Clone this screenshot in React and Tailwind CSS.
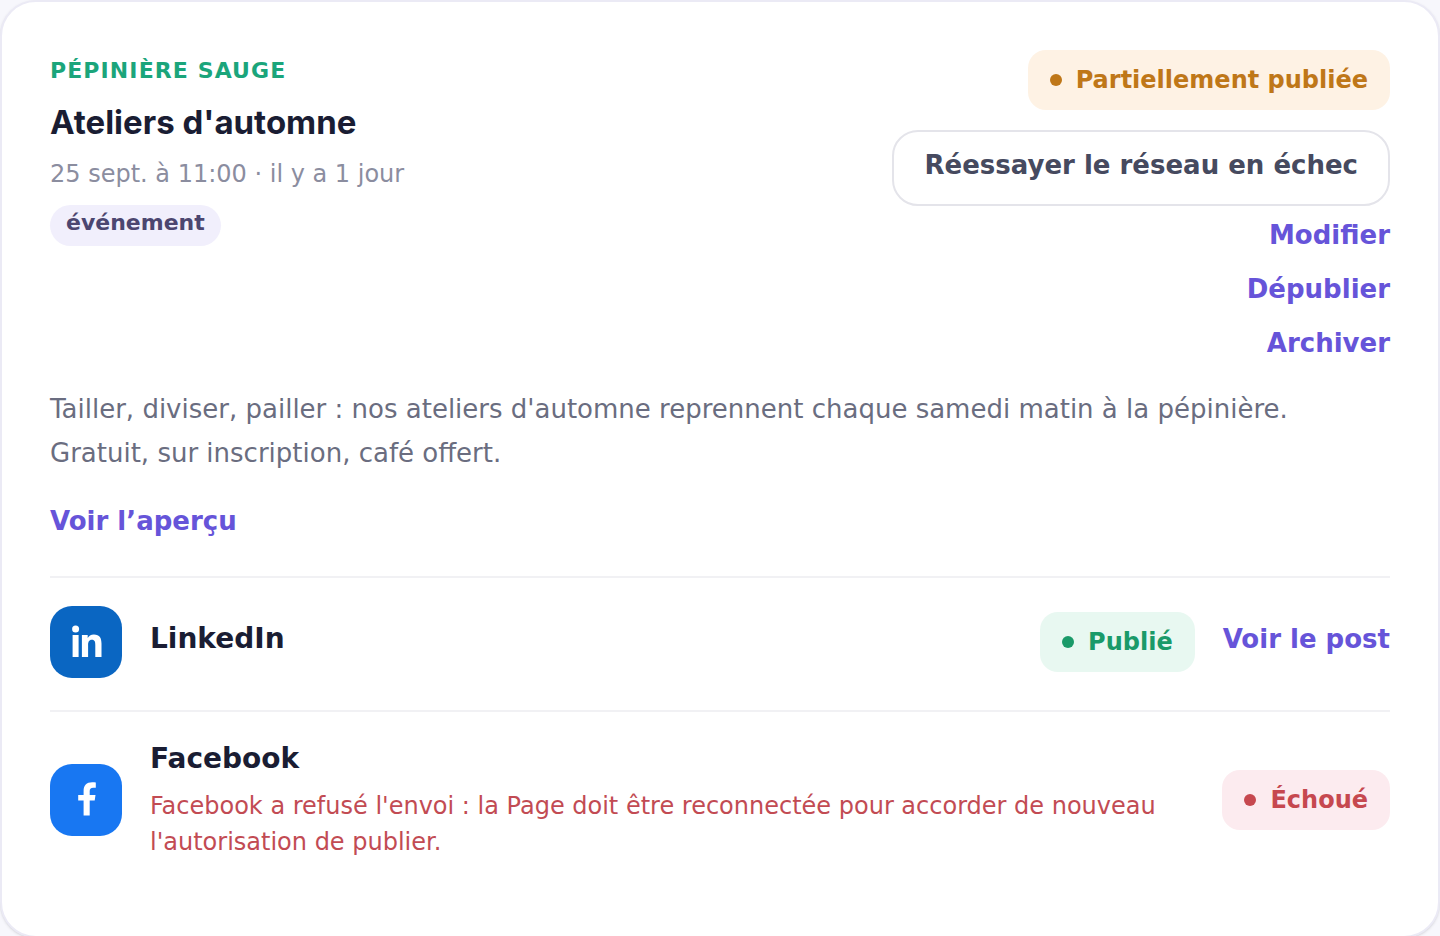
import React from 'react';
import clsx from 'clsx';

const POST = {
  brand: 'Pépinière Sauge',
  title: "Ateliers d'automne",
  meta: '25 sept. à 11:00 · il y a 1 jour',
  tag: 'événement',
  excerpt:
    "Tailler, diviser, pailler : nos ateliers d'automne reprennent chaque samedi matin à la pépinière. Gratuit, sur inscription, café offert.",
};

const NETWORKS = [
  { id: 'linkedin', name: 'LinkedIn', status: 'Publié', tone: 'success', link: 'Voir le post' },
  {
    id: 'facebook',
    name: 'Facebook',
    status: 'Échoué',
    tone: 'danger',
    error:
      "Facebook a refusé l'envoi : la Page doit être reconnectée pour accorder de nouveau l'autorisation de publier.",
  },
];

const LINK = 'text-[26px] leading-[34px] font-bold text-[#6654d9] hover:underline';

function StatusBadge({ tone, children }) {
  return (
    <span
      className={clsx(
        'inline-flex shrink-0 items-center gap-[14px] h-[60px] px-[22px] rounded-[18px] text-[24px] font-bold whitespace-nowrap',
        tone === 'warning' && 'bg-[#fef2e4] text-[#bf7718]',
        tone === 'success' && 'bg-[#e8f8f1] text-[#1a9a69]',
        tone === 'danger' && 'bg-[#fcebef] text-[#c6484f]'
      )}
    >
      <span className="size-3 rounded-full bg-current"></span>
      {children}
    </span>
  );
}

function NetworkIcon({ id }) {
  const isLinkedIn = id === 'linkedin';
  return (
    <span
      className={clsx(
        'flex size-[72px] shrink-0 items-center justify-center rounded-[22px] text-white',
        isLinkedIn ? 'bg-[#0a66c2]' : 'bg-[#1877f2]'
      )}
    >
      <svg viewBox="0 0 36 36" className="size-9" fill="currentColor" aria-hidden="true">
        {isLinkedIn ? (
          <>
            <circle cx="7.6" cy="4.9" r="3.5" />
            <path d="M4.6 11h6v22h-6z" />
            <path d="M13.9 11h5.8v3c1-1.9 3.1-3.5 6.200-3.500 5.900 0 7.600 3.700 7.600 9.100V33h-6.200V21.200c0-3-.4-5.400-3.400-5.400s-3.800 2.500-3.800 5.400V33h-6.200z" />
          </>
        ) : (
          <path d="M15.600 33.500V18.600h-5.400v-5.700h5.400V9.200c0-5.800 2.900-8.900 8.600-8.900 1.500 0 2.800.1 3.600.3v5.200h-2.500c-2.800 0-3.600 1.200-3.600 3.500v3.600h5.800l-.8 5.700h-5v14.900z" />
        )}
      </svg>
    </span>
  );
}

function NetworkRow({ network }) {
  return (
    <li className="flex items-center gap-7 border-t-2 border-[#f1f1f4] pt-7 pb-8 last:pb-7">
      <NetworkIcon id={network.id} />
      <div className="min-w-0 flex-1">
        <h3 className="pb-[6px] text-[28px] leading-[38px] font-bold text-[#1a1d33]">{network.name}</h3>
        {network.error && (
          <p className="mt-1 text-[24px] leading-9 text-[#c24b53]">{network.error}</p>
        )}
      </div>
      <StatusBadge tone={network.tone}>{network.status}</StatusBadge>
      {network.link && (
        <a href="#post" className={clsx(LINK, 'pb-[6px]')}>
          {network.link}
        </a>
      )}
    </li>
  );
}

export default function App() {
  return (
    <main className="min-h-screen bg-[#f7f7fc] font-['DejaVu_Sans',sans-serif]">
      <article className="rounded-[36px] border-2 border-[#ebeaf5] bg-white p-12 shadow-sm">
        <header className="flex items-start justify-between gap-8">
          <div>
            <p className="text-[22px] leading-[42px] font-bold tracking-wider uppercase text-[#1ba57b]">
              {POST.brand}
            </p>
            <h2 className="mt-[6px] font-['Inter',sans-serif] text-[33px] leading-12 font-bold text-[#1a1d33]">
              {POST.title}
            </h2>
            <p className="mt-2 text-[24px] leading-10 text-[#8b8d9f]">{POST.meta}</p>
            <span className="mt-[11px] inline-block rounded-full bg-[#f1effc] px-4 pt-1 pb-[9px] text-[22px] leading-7 font-bold text-[#4c4670]">
              {POST.tag}
            </span>
          </div>

          <div className="flex flex-col items-end">
            <StatusBadge tone="warning">Partiellement publiée</StatusBadge>
            <button
              type="button"
              className="mt-5 rounded-[26px] border-2 border-[#e4e4ea] bg-white px-[30px] pt-4 pb-[22px] text-[26px] leading-[34px] font-bold text-[#464a5f]"
            >
              Réessayer le réseau en échec
            </button>
            <div className="mt-3 flex flex-col items-end gap-5">
              <button type="button" className={LINK}>Modifier</button>
              <button type="button" className={LINK}>Dépublier</button>
              <button type="button" className={LINK}>Archiver</button>
            </div>
          </div>
        </header>

        <p className="mt-[27px] text-[26px] leading-[44px] text-[#6a6d80]">{POST.excerpt}</p>
        <button type="button" className={clsx(LINK, 'mt-[29px]')}>Voir l’aperçu</button>

        {/* Networks */}
        <ul className="mt-[38px]">
          {NETWORKS.map((network) => (
            <NetworkRow key={network.id} network={network} />
          ))}
        </ul>
      </article>
    </main>
  );
}
